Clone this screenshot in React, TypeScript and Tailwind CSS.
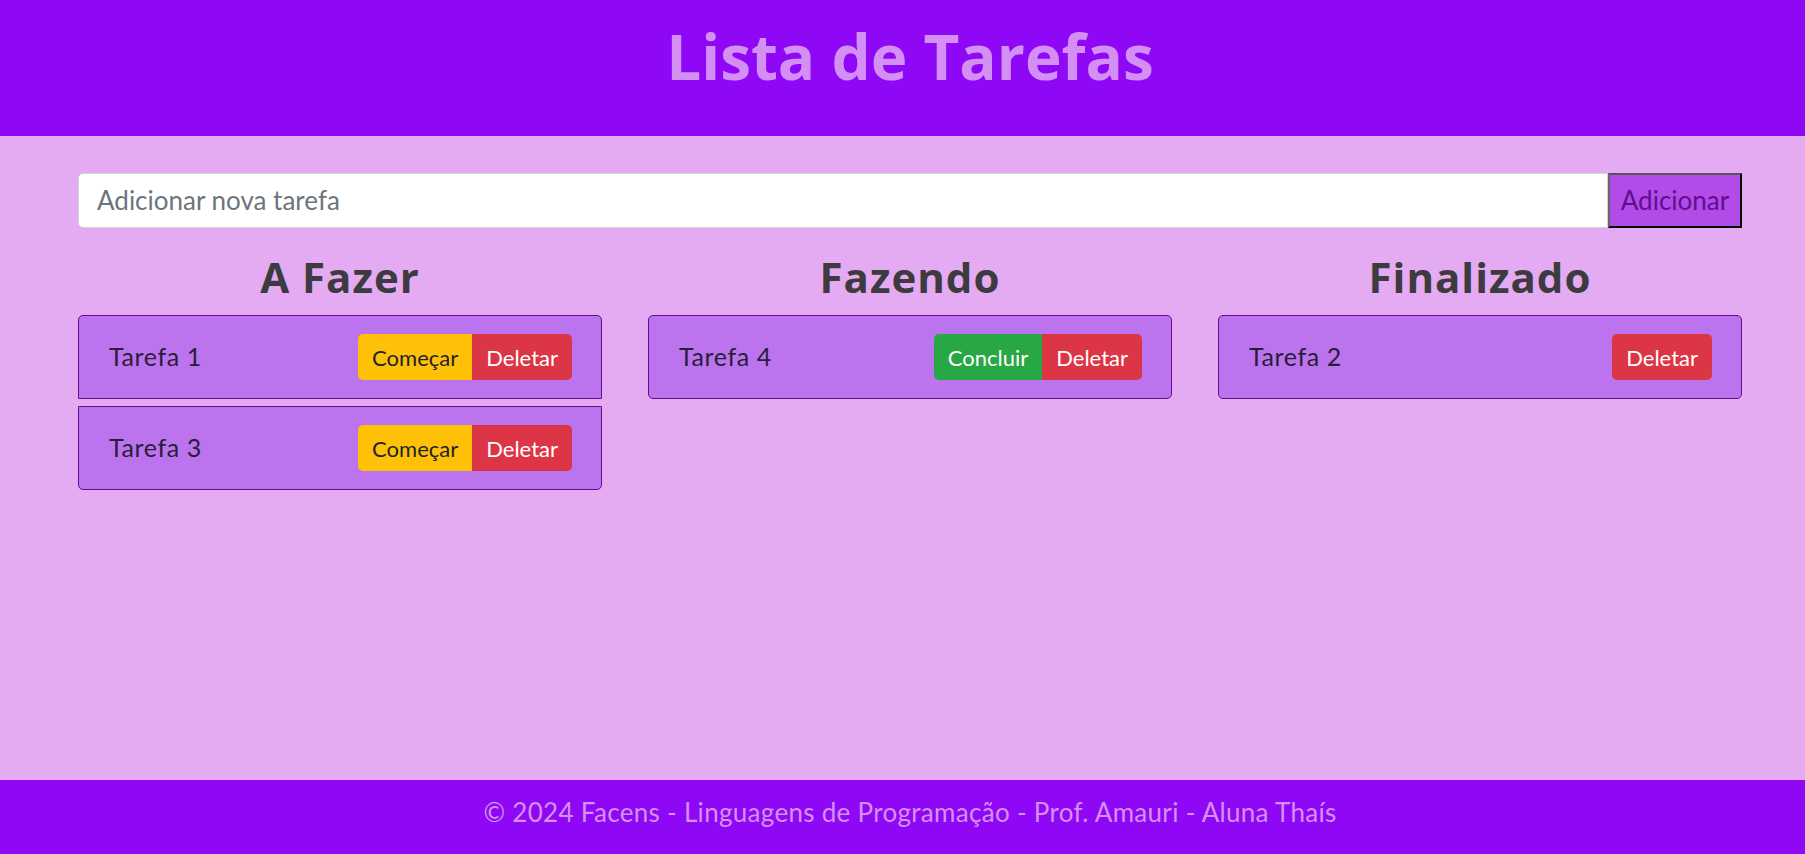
import React, { useState } from 'react';

type Status = 'fazer' | 'fazendo' | 'finalizado';

interface Task {
  id: number;
  title: string;
  status: Status;
}

const columns: { key: Status; label: string }[] = [
  { key: 'fazer', label: 'A Fazer' },
  { key: 'fazendo', label: 'Fazendo' },
  { key: 'finalizado', label: 'Finalizado' },
];

const initialTasks: Task[] = [
  { id: 1, title: 'Tarefa 1', status: 'fazer' },
  { id: 2, title: 'Tarefa 2', status: 'finalizado' },
  { id: 3, title: 'Tarefa 3', status: 'fazer' },
  { id: 4, title: 'Tarefa 4', status: 'fazendo' },
];

const font = { fontFamily: 'Lato, "Open Sans", sans-serif' };
// titles in the shot are wider than Lato bold
const boldFont = { fontFamily: '"Open Sans", Lato, sans-serif' };

const TaskCard: React.FC<{
  task: Task;
  first: boolean;
  last: boolean;
  onMove: (t: Task) => void;
  onDelete: (t: Task) => void;
}> = ({ task, first, last, onMove, onDelete }) => {
  const radius = `${first ? 'rounded-t-[5px]' : ''} ${last ? 'rounded-b-[5px]' : ''}`;
  const action =
    task.status === 'fazer'
      ? { label: 'Começar', cls: 'bg-[#ffc107] text-[#212529]' }
      : task.status === 'fazendo'
        ? { label: 'Concluir', cls: 'bg-[#28a745] text-white' }
        : null;

  return (
    <div
      className={`flex items-center justify-between border border-[#6a0b8c] bg-[#bb73ee] pl-[30px] pr-[29px] h-[84px] ${radius}`}
    >
      <span className="text-[25px] tracking-[0.6px] text-[#2a1d3a]">{task.title}</span>
      <div className="flex">
        {action && (
          <button
            onClick={() => onMove(task)}
            className={`h-[46px] px-[14px] text-[22px] rounded-l-[5px] ${action.cls}`}
          >
            {action.label}
          </button>
        )}
        <button
          onClick={() => onDelete(task)}
          className={`h-[46px] px-[14px] text-[22px] bg-[#dc3545] text-white ${action ? 'rounded-r-[5px]' : 'rounded-[5px]'}`}
        >
          Deletar
        </button>
      </div>
    </div>
  );
};

export default function App() {
  const [tasks, setTasks] = useState<Task[]>(initialTasks);
  const [text, setText] = useState('');

  const addTask = () => {
    if (!text.trim()) return;
    setTasks([...tasks, { id: Date.now(), title: text.trim(), status: 'fazer' }]);
    setText('');
  };

  const moveTask = (task: Task) => {
    const next: Status = task.status === 'fazer' ? 'fazendo' : 'finalizado';
    setTasks(tasks.map((t) => (t.id === task.id ? { ...t, status: next } : t)));
  };

  const deleteTask = (task: Task) => {
    setTasks(tasks.filter((t) => t.id !== task.id));
  };

  return (
    <div className="w-full h-screen overflow-hidden" style={font}>
      <div className="w-[1820px] h-full flex flex-col bg-[#e4aaf2]">
        <header className="h-[136px] bg-[#8f08f5] pt-[25px] text-center">
          <h1 className="text-[62px] leading-none font-bold text-[#d48ff5]" style={boldFont}>
            Lista de Tarefas
          </h1>
        </header>

        <main className="flex-1 px-[78px] pt-[37px]">
          <div className="flex h-[55px]">
            <input
              value={text}
              onChange={(e) => setText(e.target.value)}
              placeholder="Adicionar nova tarefa"
              className="flex-1 bg-white border border-[#ced4da] rounded-l-[5px] pl-[18px] text-[26px] text-[#495057] placeholder:text-[#6c757d] outline-none"
            />
            <button
              onClick={addTask}
              className="w-[134px] bg-[#b24be8] text-[#5c1090] text-[26px] border-2 border-t-[#555] border-l-[#666] border-r-black border-b-black"
            >
              Adicionar
            </button>
          </div>

          <div className="grid grid-cols-3 gap-[46px] mt-[28px]">
            {columns.map((col) => {
              const list = tasks.filter((t) => t.status === col.key);
              return (
                <div key={col.key}>
                  <h2
                    className="text-[42px] leading-none font-bold tracking-[1px] text-[#3d3b40] text-center mb-[17px]"
                    style={boldFont}
                  >
                    {col.label}
                  </h2>
                  <div className="flex flex-col gap-[7px]">
                    {list.map((task, i) => (
                      <TaskCard
                        key={task.id}
                        task={task}
                        first={i === 0}
                        last={i === list.length - 1}
                        onMove={moveTask}
                        onDelete={deleteTask}
                      />
                    ))}
                  </div>
                </div>
              );
            })}
          </div>
        </main>

        <footer className="h-[74px] bg-[#8f08f5] pt-[19px] text-center">
          <p className="text-[26px] leading-none tracking-[0.3px] text-[#d48ff5]">
            © 2024 Facens - Linguagens de Programação - Prof. Amauri - Aluna Thaís
          </p>
        </footer>
      </div>
    </div>
  );
}
